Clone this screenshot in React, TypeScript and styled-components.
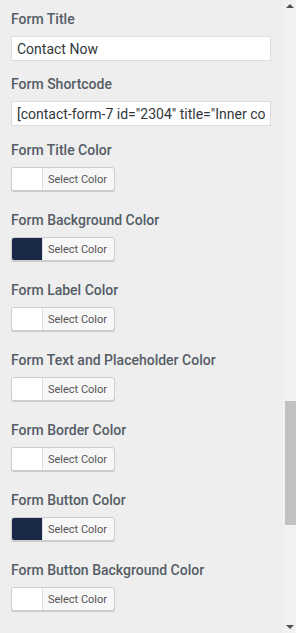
import React from "react";
import styled, { createGlobalStyle } from "styled-components";

const Global = createGlobalStyle`
  html, body { margin: 0; padding: 0; background: #eeeeee; }
  body { font-family: Roboto, "Noto Sans", Arial, sans-serif; }
  * { box-sizing: border-box; }
`;

const Page = styled.div`
  display: flex;
  width: 296px;
  height: 633px;
  overflow: hidden;
  background: #eeeeee;
`;

const Content = styled.div`
  flex: 1;
  padding: 9px 0 0 11px;
  display: flex;
  flex-direction: column;
`;

const Field = styled.div<{ $gap: number }>`
  display: flex;
  flex-direction: column;
  margin-bottom: ${(p) => p.$gap}px;
`;

const Label = styled.div`
  font-size: 14px;
  line-height: 20px;
  font-weight: 500;
  color: #555d66;
  margin-bottom: 7px;
  white-space: nowrap;
`;

const TextInput = styled.input`
  width: 260px;
  height: 25px;
  border: 1px solid #dddddd;
  background: #ffffff;
  padding: 0 5px;
  font-family: Roboto, "Noto Sans", Arial, sans-serif;
  font-size: 14px;
  color: #32373c;
  outline: none;
  border-radius: 0;
`;

const ColorButton = styled.div`
  display: flex;
  width: 104px;
  height: 24px;
  border: 1px solid #cccccc;
  border-radius: 3px;
  box-shadow: 0 1px 0 #cccccc;
  overflow: hidden;
  background: #f7f7f7;
`;

const Swatch = styled.span<{ $color: string }>`
  width: 31px;
  height: 100%;
  background: ${(p) => p.$color};
  border-right: 1px solid #dddddd;
`;

const ButtonText = styled.span`
  flex: 1;
  display: flex;
  align-items: center;
  justify-content: center;
  font-size: 11px;
  color: #555555;
  padding-right: 2px;
`;

const Scrollbar = styled.div`
  width: 13px;
  height: 100%;
  background: #f1f1f1;
  display: flex;
  flex-direction: column;
  align-items: center;
`;

const Arrow = styled.div`
  height: 12px;
  display: flex;
  align-items: center;
  justify-content: center;
  width: 100%;
`;

const Track = styled.div`
  flex: 1;
  width: 100%;
  display: flex;
  flex-direction: column;
  align-items: flex-end;
  padding-top: 389px;
`;

const Thumb = styled.div`
  width: 11px;
  height: 124px;
  background: #c1c1c1;
`;

const NAVY = "#1b2949";

const colorFields: { label: string; color: string }[] = [
  { label: "Form Title Color", color: "#ffffff" },
  { label: "Form Background Color", color: NAVY },
  { label: "Form Label Color", color: "#ffffff" },
  { label: "Form Text and Placeholder Color", color: "#ffffff" },
  { label: "Form Border Color", color: "#ffffff" },
  { label: "Form Button Color", color: NAVY },
  { label: "Form Button Background Color", color: "#ffffff" },
];

export default function App() {
  return (
    <Page>
      <Global />
      <Content>
        <Field $gap={13}>
          <Label>Form Title</Label>
          <TextInput readOnly value="Contact Now" />
        </Field>
        <Field $gap={14}>
          <Label>Form Shortcode</Label>
          <TextInput
            readOnly
            value={'[contact-form-7 id="2304" title="Inner contact form"]'}
          />
        </Field>
        {colorFields.map((f) => (
          <Field $gap={19} key={f.label}>
            <Label>{f.label}</Label>
            <ColorButton>
              <Swatch $color={f.color} />
              <ButtonText>Select Color</ButtonText>
            </ColorButton>
          </Field>
        ))}
      </Content>
      <Scrollbar>
        <Arrow>
          <svg width="8" height="5" viewBox="0 0 8 5">
            <polygon points="4,0 8,4 0,4" fill="#505050" />
          </svg>
        </Arrow>
        <Track>
          <Thumb />
        </Track>
        <Arrow>
          <svg width="8" height="5" viewBox="0 0 8 5">
            <polygon points="0,0 8,0 4,4" fill="#505050" />
          </svg>
        </Arrow>
      </Scrollbar>
    </Page>
  );
}
